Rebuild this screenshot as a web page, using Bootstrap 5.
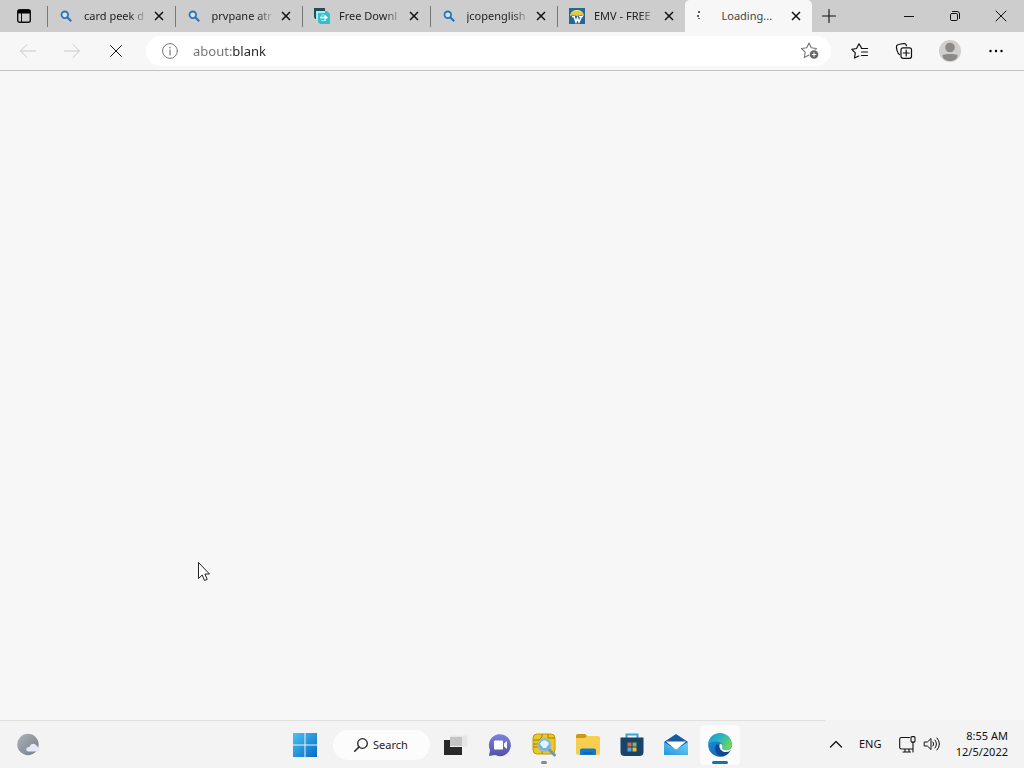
<!DOCTYPE html>
<html lang="en">
<head>
<meta charset="utf-8">
<meta name="viewport" content="width=device-width, initial-scale=1">
<title>Loading...</title>
<link href="https://cdn.jsdelivr.net/npm/bootstrap@5.3.0/dist/css/bootstrap.min.css" rel="stylesheet">
<script src="https://cdn.jsdelivr.net/npm/bootstrap@5.3.0/dist/js/bootstrap.bundle.min.js"></script>
<style>
body{font-family:"Noto Sans","Open Sans",sans-serif;font-size:11px;line-height:16px;color:#222;background:#f7f7f7}
button{border:0;background:none;padding:0;color:#111;display:flex;align-items:center;justify-content:center;flex:none}
svg{display:block;flex:none;overflow:visible}
.ln{fill:none;stroke:currentColor;stroke-linecap:round;stroke-linejoin:round}
.strip{height:32px;background:#cdcdcd}
.strip-menu{width:47px}
.tabs{min-width:0}
.tab-item{flex:1 1 0;min-width:0;border-left:1px solid #777;border-image:linear-gradient(transparent 7px,#777 7px,#777 26px,transparent 26px) 1;padding-right:6px}
.tab-item.current{background:#f7f7f7;border-image:none;border-color:#f7f7f7;border-radius:5px 5px 0 0}
.fav{width:36px;padding-left:11px;flex:none}
.fav.small-icon{padding-left:12px}
.tab-title{flex:1;min-width:0;overflow:hidden;white-space:nowrap;color:#222;text-decoration:none;text-align:left;-webkit-mask-image:linear-gradient(90deg,#000 75%,transparent 105%);mask-image:linear-gradient(90deg,#000 75%,transparent 105%)}
.current .tab-title{-webkit-mask-image:none;mask-image:none;color:#444}
.tab-x{width:20px;height:24px;margin-left:4px}
.tab-add{width:34px}
.win{width:46px}
.strip-end{width:212px;flex:none}
.toolbar{height:39px;border-bottom:1px solid #c3c3c3;padding:0 6px}
.tool{width:44px;height:32px}
.tool.profile{width:48px}
.tool:disabled{color:#c9c9c9}
.address{height:30px;border-radius:15px;background:#fff;padding:0 12px 0 16px;margin:0 7px 0 8px;color:#777;min-width:0}
.url{margin-left:15px;font-size:13px;line-height:20px;min-width:0}
.url input{border:0;outline:0;padding:0;width:100%;background:none;height:20px;color:transparent;background-image:linear-gradient(90deg,#707070 39px,#222 39px);-webkit-background-clip:text;background-clip:text;display:block}
.pointer{position:absolute;left:198px;top:562px;pointer-events:none}
.taskbar{height:48px;background:#f3f3f3;border-top:1px solid #e0e0e0;display:grid;grid-template-columns:1fr auto 1fr}
.weather{width:56px}
.app{width:40px;height:40px;border-radius:4px;position:relative}
.app.active{background:#fbfbfb}
.app.active::after,.app.running::after{content:"";position:absolute;bottom:1px;height:3px;border-radius:2px;width:16px;background:#1670b5}
.app.running::after{width:6px;background:#888}
.find{width:97px;height:30px;border-radius:15px;background:#fcfcfc;gap:5px;color:#222;margin:0 2px 0 4px}
.tray{background:#f3f3f3;margin-top:-1px;width:199px;justify-self:end}
.clock{text-align:right;display:block}
</style>
</head>
<body class="vh-100 d-flex flex-column overflow-hidden position-relative">
<svg class="position-absolute" width="0" height="0" aria-hidden="true"><defs>
<symbol id="x" viewBox="0 0 10 10"><path d="M1 1l8 8M9 1L1 9" fill="none" stroke="#111" stroke-width="1.5"/></symbol>
<symbol id="lens" viewBox="0 0 12 12"><circle cx="4.8" cy="4.8" r="3.3" fill="#d5e4f1" stroke="#2875bd" stroke-width="1.8"/><path d="M7.2 7.2l4 4" stroke="#2875bd" stroke-width="2.2"/></symbol>
<linearGradient id="wn" x1="0" y1="0" x2="1" y2="1"><stop stop-color="#48c4f4"/><stop offset="1" stop-color="#0868c4"/></linearGradient>
<linearGradient id="ch" x1="0" y1="0" x2="0" y2="1"><stop stop-color="#7d83dc"/><stop offset="1" stop-color="#5550a5"/></linearGradient>
<linearGradient id="eg" x1="0" y1="0" x2="1" y2=".6"><stop stop-color="#1a94d8"/><stop offset=".5" stop-color="#2bb5c0"/><stop offset="1" stop-color="#6bd852"/></linearGradient>
<linearGradient id="eb" x1="0" y1="0" x2=".6" y2="1"><stop stop-color="#1f9be0"/><stop offset="1" stop-color="#0f62b5"/></linearGradient>
<linearGradient id="mn" x1="0" y1="0" x2="1" y2="1"><stop stop-color="#adb2ba"/><stop offset="1" stop-color="#767d87"/></linearGradient>
<linearGradient id="ml" x1="0" y1="1" x2="1" y2="0"><stop stop-color="#2793dc"/><stop offset="1" stop-color="#72d4fa"/></linearGradient>
</defs></svg>

<header>
<div class="strip d-flex">
  <button class="strip-menu" aria-label="Tab actions"><svg width="14" height="14" viewBox="0 0 14 14"><rect x=".7" y=".7" width="12.6" height="12.6" rx="2" class="ln" stroke-width="1.4"/><path d="M1 1h12v3.5H1z"/><path d="M4.5 4v9" stroke="#111"/></svg></button>
  <nav class="tabs d-flex flex-fill" aria-label="Tabs">
    <div class="tab-item d-flex align-items-center"><span class="fav small-icon"><svg width="12" height="12"><use href="#lens"/></svg></span><a href="#" class="tab-title">card peek d</a><button class="tab-x" aria-label="Close tab"><svg width="10" height="10"><use href="#x"/></svg></button></div>
    <div class="tab-item d-flex align-items-center"><span class="fav small-icon"><svg width="12" height="12"><use href="#lens"/></svg></span><a href="#" class="tab-title">prvpane atr</a><button class="tab-x" aria-label="Close tab"><svg width="10" height="10"><use href="#x"/></svg></button></div>
    <div class="tab-item d-flex align-items-center"><span class="fav"><svg width="16" height="16"><path d="M0 0h11v3H4v8H1L0 9z" fill="#204e58"/><path d="M4 3h9l3 3v10H6l-2-2z" fill="#31bfd1"/><path d="M2 3h9v2H4v7H2z" fill="#a8eaee"/><path d="M6 9.500h5" stroke="#e9ffff" stroke-width="1.800"/><path d="M7 7h3M7 12.500h5" stroke="#a5eef2"/><path d="M10.500 6.500l3.500 3-3.500 3z" fill="#e9ffff"/></svg></span><a href="#" class="tab-title">Free Downl</a><button class="tab-x" aria-label="Close tab"><svg width="10" height="10"><use href="#x"/></svg></button></div>
    <div class="tab-item d-flex align-items-center"><span class="fav small-icon"><svg width="12" height="12"><use href="#lens"/></svg></span><a href="#" class="tab-title">jcopenglish</a><button class="tab-x" aria-label="Close tab"><svg width="10" height="10"><use href="#x"/></svg></button></div>
    <div class="tab-item d-flex align-items-center"><span class="fav"><svg width="16" height="16"><path d="M0 0h16v16H0z" fill="#25679b"/><path d="M1 8C1 0 15 0 15 8l-3-1-4 1-4-1z" fill="#e5c843"/><path d="M4 4c2-2 6-2 8 0" stroke="#f5e87c" fill="none"/><path d="M3 8.500h3M10 8.500h4M5 8.500L7 14l1.500-4L10 14l2.500-5.500" fill="none" stroke="#fff" stroke-width="1.500"/></svg></span><a href="#" class="tab-title">EMV - FREE</a><button class="tab-x" aria-label="Close tab"><svg width="10" height="10"><use href="#x"/></svg></button></div>
    <div class="tab-item current d-flex align-items-center"><span class="fav"><svg width="16" height="16"><path d="M1 3h2v2H1zM0 7h2v2H0zM1 10h2v1H1z" fill="#655"/></svg></span><a href="#" class="tab-title" aria-current="page">Loading...</a><button class="tab-x" aria-label="Close tab"><svg width="10" height="10"><use href="#x"/></svg></button></div>
  </nav>
  <div class="strip-end d-flex">
    <button class="tab-add" aria-label="New tab"><svg width="14" height="14"><path d="M7 .5v13M.5 7h13" class="ln" stroke-width="1.100"/></svg></button>
    <button class="win ms-auto" aria-label="Minimize"><svg width="10" height="10"><path d="M0 5.500h10" stroke="#111"/></svg></button>
    <button class="win" aria-label="Restore"><svg width="10" height="10"><rect x=".5" y="2.500" width="7" height="7" rx="1.300" class="ln"/><path d="M2.500.5H7a2.500 2.500 0 0 1 2.500 2.500v4.500" class="ln"/></svg></button>
    <button class="win" aria-label="Close"><svg width="10" height="10"><path d="M0 0l10 10M10 0L0 10" class="ln"/></svg></button>
  </div>
</div>
<div class="toolbar d-flex align-items-center">
  <button class="tool" disabled aria-label="Back"><svg width="16" height="14"><path d="M15.500 7H.5M7 .5L.5 7 7 13.500" class="ln"/></svg></button>
  <button class="tool" disabled aria-label="Forward"><svg width="16" height="14"><path d="M.5 7h15M9 .5L15.500 7 9 13.500" class="ln"/></svg></button>
  <button class="tool" aria-label="Stop"><svg width="12" height="12"><path d="M.5.5l11 11M11.500.5l-11 11" class="ln"/></svg></button>
  <div class="address d-flex align-items-center flex-fill">
    <svg width="16" height="16"><circle cx="8" cy="8" r="7.400" class="ln"/><path d="M8 7v5M8 4v1" class="ln" stroke-width="1.200"/></svg>
    <label class="url flex-fill"><input type="text" value="about:blank" aria-label="Address"></label>
    <button aria-label="Add to favorites"><svg width="18" height="18" color="#777"><path d="M8 1l2.200 4.800 5.300.7-3.900 3.700.9 5.300L8 13l-4.700 2.500.9-5.300L.5 6.500l5.300-.7z" class="ln" stroke-width="1.100"/><circle cx="13" cy="12.500" r="5" fill="#fff"/><circle cx="13" cy="12.500" r="4.300" fill="#666"/><path d="M13 10.200v4.600M10.700 12.500h4.600" stroke="#fff"/></svg></button>
  </div>
  <button class="tool" aria-label="Favorites"><svg width="18" height="16"><path d="M16.500 5.500l-5.800-.2L8 .8 5.500 5.500.8 6.300l3.500 3.500-.8 5.200 4.300-2" class="ln" stroke-width="1.200"/><path d="M10.500 5.500h6M10.500 9h6M10.500 12.500h6" class="ln" stroke-width="1.200"/></svg></button>
  <button class="tool" aria-label="Collections"><svg width="16" height="16"><path d="M3.500 11.500C1.500 10.500 0 5 .6 2.700 1 1.500 8 0 9.300.8c.8.5 1 1.500 1.200 2" class="ln" stroke-width="1.200"/><rect x="5" y="4.800" width="10.500" height="10.500" rx="2" class="ln" stroke-width="1.200"/><path d="M10.200 7v6M7.200 10h6" class="ln" stroke-width="1.200"/></svg></button>
  <button class="tool profile" aria-label="Profile"><svg width="22" height="22"><circle cx="11" cy="11" r="11" fill="#d0cfcd"/><circle cx="11" cy="7.500" r="4.800" fill="#8c8a88"/><path d="M3.500 15.500c0-2 15-2 15 0 0 3-3 5.500-7.500 5.500s-7.500-2.500-7.500-5.500z" fill="#8c8a88"/></svg></button>
  <button class="tool" aria-label="Settings and more"><svg width="14" height="4"><circle cx="1.500" cy="2" r="1.200"/><circle cx="7" cy="2" r="1.200"/><circle cx="12.500" cy="2" r="1.200"/></svg></button>
</div>
</header>
<main class="flex-fill"></main>
<svg class="pointer" width="13" height="20" aria-hidden="true"><path d="M.5.5v16l3.700-3.500 2.300 5.500 2.700-1.100-2.300-5.400h4.600z" fill="#fff" stroke="#222"/></svg>

<footer class="taskbar">
  <button class="weather" aria-label="Weather"><svg width="24" height="22"><circle cx="12" cy="10.500" r="10.700" fill="url(#mn)"/><path d="M12 17.500c-3-1-2-5 1.500-4.500 1-4 6-4.500 7.500-.5 4 0 4 5 .5 5z" fill="#e5e8f4"/></svg></button>
  <nav class="d-flex align-items-center gap-1" aria-label="Taskbar">
    <button class="app" aria-label="Start"><svg width="24" height="24"><path d="M0 0h11.500v11.500H0zM12.500 0H24v11.500H12.500zM0 12.500h11.500V24H0zM12.500 12.500H24V24H12.500z" fill="url(#wn)"/></svg></button>
    <button class="find"><svg width="14" height="14"><circle cx="8.500" cy="5.500" r="4.800" class="ln" stroke-width="1.300"/><path d="M5 9l-4.300 4.300" class="ln" stroke-width="1.500"/></svg>Search</button>
    <button class="app" aria-label="Task view"><svg width="24" height="24"><path d="M0 7h18v15H0z" fill="#292929"/><path d="M6 2h18v12H6z" fill="#eee"/><path d="M6 3h17v10H6z" fill="#e6e6e6"/><path d="M6 4h12v9H6z" fill="#c4c4c4"/></svg></button>
    <button class="app" aria-label="Chat"><svg width="24" height="24"><path d="M1 23l1-6A11 11 0 1 1 7 22z" fill="url(#ch)"/><rect x="6" y="7.500" width="9" height="9" rx="1" fill="#fff"/><path d="M16 10.500l3-2.500v8l-3-2.500z" fill="#fff"/></svg></button>
    <button class="app running" aria-label="Card Peek"><svg width="24" height="24"><rect x="1" y="1" width="22" height="20" rx="4" fill="#edc91b" stroke="#b8991b"/><path d="M1 7h6l3-3V1M1 14h6l3 3v4M16 1v4h7M1 11h5" fill="none" stroke="#9c7f10"/><circle cx="12.500" cy="12" r="6.300" fill="#62b5e4" stroke="#a9b6bd" stroke-width="1.800"/><path d="M8 11c2-5 7-5 9 0l-3 4h-3z" fill="#e2f6ff"/><path d="M17.500 17l5 5" stroke="#7796b0" stroke-width="3" stroke-linecap="round"/></svg></button>
    <button class="app" aria-label="File Explorer"><svg width="24" height="24"><path d="M0 3q0-2 2-2h7l2 2h11q2 0 2 2v15q0 2-2 2H2q-2 0-2-2z" fill="#f6cf50"/><path d="M0 5V3q0-2 2-2h7l2 2-2 2z" fill="#c99a19"/><path d="M4 22v-5q0-1.500 2-1.500h12q2 0 2 1.500v5z" fill="#1678cd"/><path d="M7 20h10" stroke="#0b5796"/></svg></button>
    <button class="app" aria-label="Store"><svg width="24" height="24"><path d="M6.500 5V1.500h11V5" fill="none" stroke="#38a4d2" stroke-width="2"/><path d="M.5 4.500h23V19q0 4-4 4h-15q-4 0-4-4z" fill="#1b4268"/><path d="M7.500 9.500h4v4h-4z" fill="#e46247"/><path d="M12.500 9.500h4v4h-4z" fill="#83b74a"/><path d="M7.500 14.500h4v4h-4z" fill="#50a9d8"/><path d="M12.500 14.500h4v4h-4z" fill="#eabb37"/></svg></button>
    <button class="app" aria-label="Mail"><svg width="24" height="24"><path d="M0 9L12 1l12 8v6H0z" fill="#155ca3"/><path d="M2 8.500h20L12 17z" fill="#fff"/><path d="M0 9l12 7.500L24 9v13H0z" fill="url(#ml)"/></svg></button>
    <button class="app active" aria-label="Microsoft Edge"><svg width="24" height="24"><circle cx="12" cy="12" r="11.800" fill="url(#eb)"/><path d="M8.500 11C5 17 9 23.500 15 23.400c3.500-.8 6-3 7.500-5.900-5 2.500-10.500.5-10.500-4.500z" fill="#12488f"/><path d="M.2 11C1 4 6 .2 12 .2c7 0 12 5 11.800 11 0 4-3 6-6 6-2.500 0-4-1-3.500-2 1.500-2 .5-6-4-6.500C6 8 1.500 9 .2 11z" fill="url(#eg)"/><path d="M12.300 10.500c2.300 1 2.900 3 2 4.500-.6 1.200 1 2.300 3.700 2.300 2.500 0 4.500-1 5.700-3.300-.3 1.500-.7 2.800-1.400 3.900-3.500 2-7.800 1.200-9.800-1.500-1.500-2-1.400-4.500-.2-5.900z" fill="#f5fbfd"/></svg></button>
  </nav>
  <div class="tray d-flex align-items-center">
    <button class="ms-0 px-1" aria-label="Show hidden icons"><svg width="14" height="8"><path d="M1.500 7L7 1.500 12.500 7" class="ln" stroke-width="1.300"/></svg></button>
    <button class="ms-2 px-1">ENG</button>
    <button class="ms-auto gap-2" aria-label="Network and volume"><svg width="17" height="17"><path d="M10.500 1.500h-8Q.7 1.500.7 3.200v8.200q0 1.600 1.800 1.600h11M6 13v3M10 13v3M4 16h7.500M14 6v10" class="ln" stroke-width="1.100"/><rect x="12" y=".6" width="4" height="5.500" rx="1" class="ln" stroke-width="1.100"/></svg><svg width="16" height="14"><path d="M.6 5h2.800L7 1.500v11L3.400 9H.6zM9 5q1.500 2 0 4M11 3q3 4 0 8M13 1q5 6 0 12" class="ln"/></svg></button>
    <button class="clock ms-3 me-3">8:55 AM<br>12/5/2022</button>
  </div>
</footer>
</body>
</html>
